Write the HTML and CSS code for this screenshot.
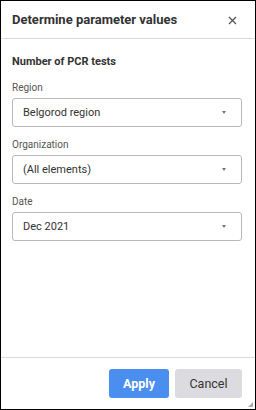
FILE: index.html
```html
<!DOCTYPE html>
<html lang="en">
<head>
    <meta charset="UTF-8">
    <meta name="viewport" content="width=device-width, initial-scale=1.0">
    <title>Determine parameter values</title>
    <link rel="stylesheet" href="styles.css">
</head>

<body>
    <div class="dialog">
        <!-- header -->
        <div class="dialog-header">
            <h2>Determine parameter values</h2>
            <span class="close">
                <svg width="9" height="9" viewBox="0 0 9 9">
                    <path d="M1 1 L8 8 M8 1 L1 8" stroke="#555" stroke-width="1.3" fill="none"/>
                </svg>
            </span>
        </div>

        <!-- parameters -->
        <div class="dialog-body">
            <h3>Number of PCR tests</h3>

            <div class="field">
                <label>Region</label>
                <div class="select">
                    <span>Belgorod region</span>
                    <i class="arrow"></i>
                </div>
            </div>

            <div class="field">
                <label>Organization</label>
                <div class="select">
                    <span>(All elements)</span>
                    <i class="arrow"></i>
                </div>
            </div>

            <div class="field">
                <label>Date</label>
                <div class="select">
                    <span>Dec 2021</span>
                    <i class="arrow"></i>
                </div>
            </div>
        </div>

        <!-- buttons -->
        <div class="dialog-footer">
            <button class="btn btn-apply">Apply</button>
            <button class="btn btn-cancel">Cancel</button>
            <span class="grip"></span>
        </div>
    </div>
</body>
</html>
```

FILE: styles.css
```css
/* dialog */

body {
    margin: 0;
    font-family: Roboto, "Liberation Sans", sans-serif;
    background: #fff;
}

.dialog {
    width: 256px;
    height: 410px;
    box-sizing: border-box;
    border: 1px solid #000;
    display: flex;
    flex-direction: column;
    position: relative;
}

.dialog-header {
    height: 37px;
    border-bottom: 1px solid #d8d8de;
    display: flex;
    align-items: center;
    justify-content: space-between;
    padding: 0 18px 0 11px;
}

.dialog-header h2 {
    margin: 0;
    font-size: 13px;
    font-weight: 700;
    color: #333;
}

.close {
    display: flex;
    margin-top: 2px;
}

.dialog-body {
    flex: 1;
    padding: 16px 13px 0 11px;
}

.dialog-body h3 {
    margin: 0 0 14px;
    font-size: 11px;
    font-weight: 700;
    color: #333;
}

.field {
    margin-bottom: 12px;
}

.field label {
    display: block;
    font-size: 10px;
    color: #555;
    margin-bottom: 5px;
}

.select {
    height: 27px;
    border: 1px solid #b8b8bc;
    border-radius: 3px;
    display: flex;
    align-items: center;
    justify-content: space-between;
    padding: 0 15px 0 10px;
    font-size: 11px;
    color: #333;
}

.arrow {
    width: 0;
    height: 0;
    border-left: 2.5px solid transparent;
    border-right: 2.5px solid transparent;
    border-top: 3px solid #777;
}

.dialog-footer {
    border-top: 1px solid #d8d8de;
    display: flex;
    justify-content: flex-end;
    gap: 6px;
    padding: 11px 13px 11px 0;
}

.btn {
    height: 29px;
    border: none;
    border-radius: 3px;
    font-family: Roboto, "Liberation Sans", sans-serif;
    font-size: 12.5px;
    cursor: pointer;
}

.btn-apply {
    width: 60px;
    background: #4a8ff0;
    color: #fff;
    font-weight: 700;
}

.btn-cancel {
    width: 67px;
    background: #dcdce0;
    color: #333;
}

.grip {
    position: absolute;
    right: 2px;
    bottom: 2px;
    width: 0;
    height: 0;
    border-left: 5px solid transparent;
    border-bottom: 5px solid #aaa;
}
```
